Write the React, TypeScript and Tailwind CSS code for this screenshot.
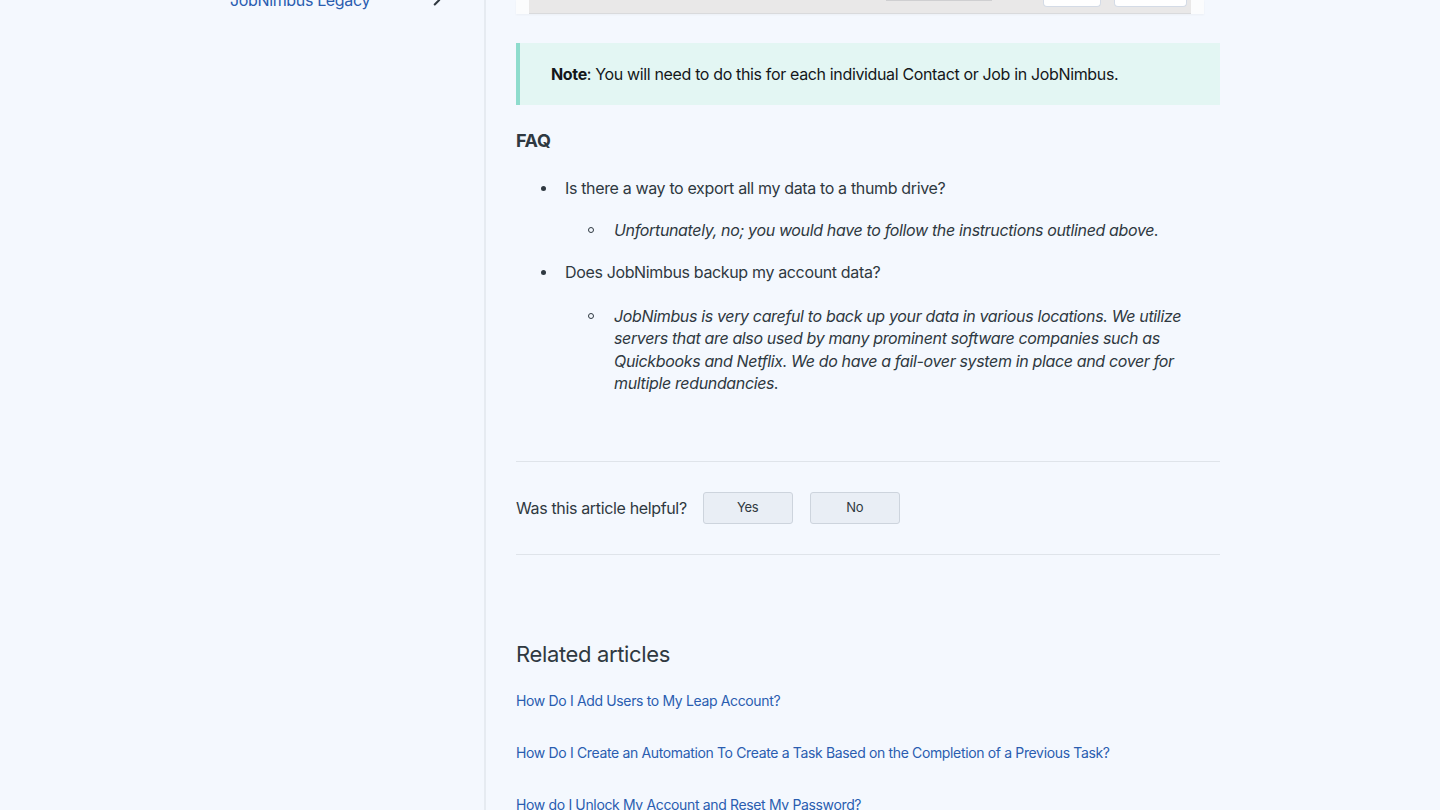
import { ChevronRight } from "lucide-react";

const font = { fontFamily: "Inter, 'Noto Sans', sans-serif" };

function Sidebar() {
  return (
    <aside className="w-[486px] shrink-0 border-r-2 border-[#e6ebf1]">
      <div className="-mt-[11px] ml-[230px] w-[216px] flex items-center justify-between">
        <span className="text-[16px] leading-[22px] text-[#2a5db0]">JobNimbus Legacy</span>
        <ChevronRight className="w-[18px] h-[18px] text-[#2f3941]" strokeWidth={2.75} />
      </div>
    </aside>
  );
}

function ScreenshotTail() {
  // bottom edge of the screenshot image above the note
  return (
    <div className="w-[688px] h-[16px] bg-[#fbfcfd] px-[13px] shadow-[0_1px_2px_rgba(0,0,0,0.04)]">
      <div className="h-[14px] bg-[#e9e8e8] border-b border-[#d9dadc] relative">
        <div className="absolute left-[357px] top-0 w-[106px] h-[1px] bg-[#cfcfd1]" />
        <div className="absolute left-[514px] top-0 w-[58px] h-[7px] bg-white border border-t-0 border-[#d4dbe6] rounded-b-sm" />
        <div className="absolute left-[585px] top-0 w-[73px] h-[7px] bg-white border border-t-0 border-[#d4dbe6] rounded-b-sm" />
      </div>
    </div>
  );
}

function Bullet({ sub, children }: { sub?: boolean; children: React.ReactNode }) {
  return (
    <div className="flex">
      <div className={sub ? "w-[26px] shrink-0 pt-[8px]" : "w-[26px] shrink-0 pt-[8.5px] pl-[2px]"}>
        {sub ? (
          <div className="w-[6px] h-[6px] rounded-full border border-[#2f3941]" />
        ) : (
          <div className="w-[5px] h-[5px] rounded-full bg-[#2f3941]" />
        )}
      </div>
      <div className="flex-1">{children}</div>
    </div>
  );
}

export default function App() {
  return (
    <div className="min-h-screen h-[810px] overflow-hidden bg-[#f4f8fe] text-[#2f3941] flex tracking-[-0.022em]" style={font}>
      <Sidebar />
      <main className="pl-[30px] w-[734px] flex flex-col">
        <ScreenshotTail />

        <div className="mt-[29px] bg-[#e3f6f3] border-l-4 border-[#8edccd] pl-[31px] py-[20px] text-[16px] leading-[22px] text-[#14171a]">
          <strong className="font-bold">Note</strong>: You will need to do this for each individual Contact or Job in JobNimbus.
        </div>

        <h3 className="mt-[24px] text-[18px] leading-[24px] font-bold text-[#2f3941]">FAQ</h3>

        <div className="mt-[24px] pl-[23px] text-[16px] leading-[22.5px]">
          <Bullet>
            Is there a way to export all my data to a thumb drive?
            <div className="mt-[19px] pl-[23px] italic">
              <Bullet sub>Unfortunately, no; you would have to follow the instructions outlined above.</Bullet>
            </div>
          </Bullet>
          <div className="mt-[20px]">
            <Bullet>
              Does JobNimbus backup my account data?
              <div className="mt-[21px] pl-[23px] pr-[20px] italic">
                <Bullet sub>
                  JobNimbus is very careful to back up your data in various locations. We utilize servers that are also used by many prominent software companies such as Quickbooks and Netflix. We do have a fail-over system in place and cover for multiple redundancies.
                </Bullet>
              </div>
            </Bullet>
          </div>
        </div>

        <div className="mt-[66px] border-t border-[#dfe4ea]" />
        <div className="py-[30px] flex items-center">
          <span className="text-[16px] leading-[22px]">Was this article helpful?</span>
          <button className="ml-[16px] w-[90px] h-[32px] rounded-[3px] bg-[#e9eef5] border border-[#cdd4dd] text-[13px] text-[#2f3941]">Yes</button>
          <button className="ml-[17px] w-[90px] h-[32px] rounded-[3px] bg-[#e9eef5] border border-[#cdd4dd] text-[13px] text-[#2f3941]">No</button>
        </div>
        <div className="border-t border-[#dfe4ea]" />

        <h2 className="mt-[84px] text-[22px] leading-[30px] text-[#2f3941]">Related articles</h2>
        <div className="mt-[22px] flex flex-col gap-[32px] text-[14px] leading-[20px] text-[#2a5db0]">
          <a href="#">How Do I Add Users to My Leap Account?</a>
          <a href="#">How Do I Create an Automation To Create a Task Based on the Completion of a Previous Task?</a>
          <a href="#">How do I Unlock My Account and Reset My Password?</a>
        </div>
      </main>
    </div>
  );
}
